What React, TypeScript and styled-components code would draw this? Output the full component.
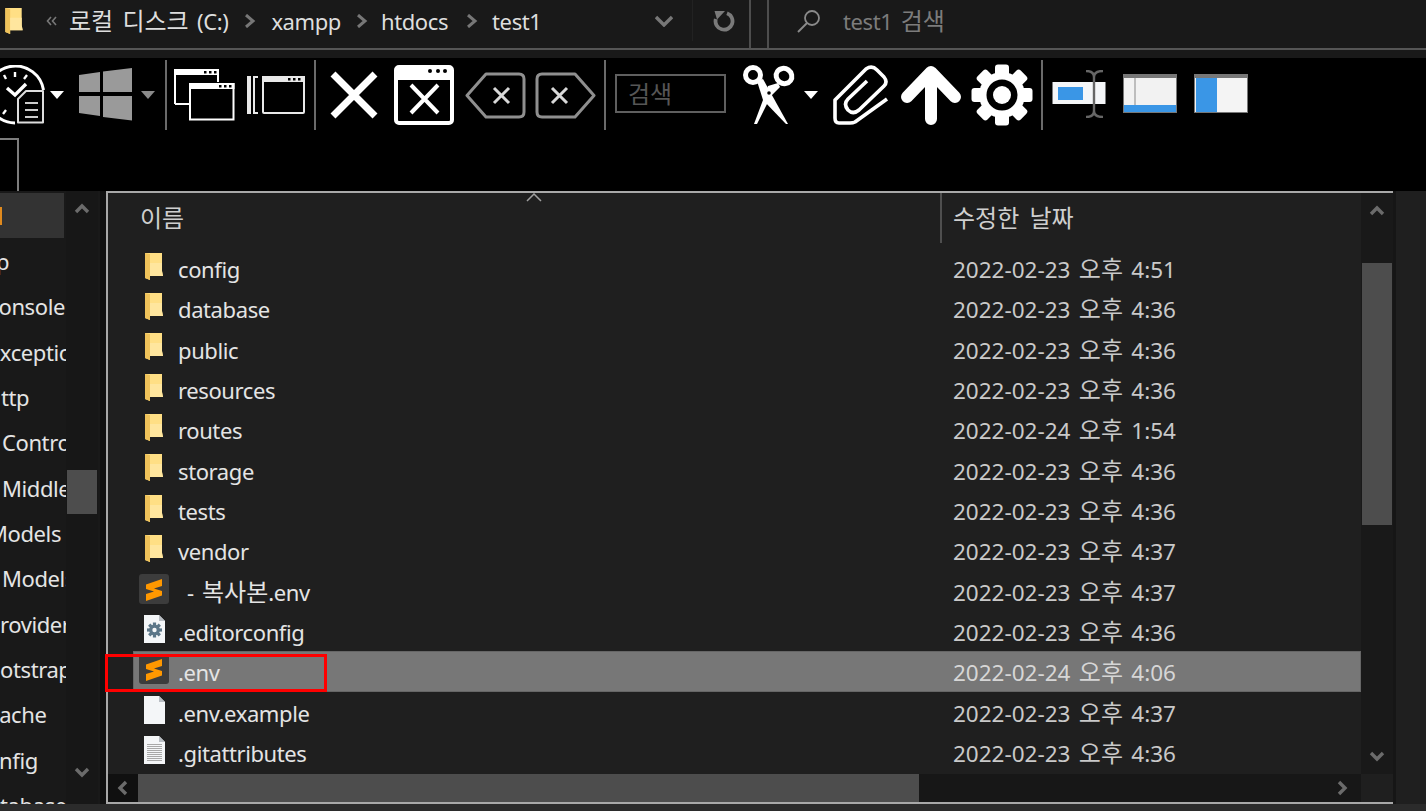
import React from "react";
import styled, { createGlobalStyle } from "styled-components";

const files = [
  { name: "config", date: "2022-02-23 오후 4:51", kind: "folder" },
  { name: "database", date: "2022-02-23 오후 4:36", kind: "folder" },
  { name: "public", date: "2022-02-23 오후 4:36", kind: "folder" },
  { name: "resources", date: "2022-02-23 오후 4:36", kind: "folder" },
  { name: "routes", date: "2022-02-24 오후 1:54", kind: "folder" },
  { name: "storage", date: "2022-02-23 오후 4:36", kind: "folder" },
  { name: "tests", date: "2022-02-23 오후 4:36", kind: "folder" },
  { name: "vendor", date: "2022-02-23 오후 4:37", kind: "folder" },
  { name: "- 복사본.env", date: "2022-02-23 오후 4:37", kind: "sublime", indent: 9 },
  { name: ".editorconfig", date: "2022-02-23 오후 4:36", kind: "config" },
  { name: ".env", date: "2022-02-24 오후 4:06", kind: "sublime", selected: true },
  { name: ".env.example", date: "2022-02-23 오후 4:37", kind: "blank" },
  { name: ".gitattributes", date: "2022-02-23 오후 4:36", kind: "text" },
];

const tree = [
  { name: "", shift: 0, selected: true },
  { name: "app", shift: -29 },
  { name: "Console", shift: -15 },
  { name: "Exceptions", shift: -12 },
  { name: "Http", shift: -15 },
  { name: "Controllers", shift: 2 },
  { name: "Middleware", shift: 2 },
  { name: "Models", shift: -12 },
  { name: "Models", shift: 2 },
  { name: "Providers", shift: -13 },
  { name: "bootstrap", shift: -26 },
  { name: "cache", shift: -11 },
  { name: "config", shift: -24 },
  { name: "database", shift: -25 },
];

const GlobalStyle = createGlobalStyle`
  html, body {
    margin: 0;
    background: #000;
    overflow: hidden;
  }
`;

const Page = styled.div`
  width: 1426px;
  height: 811px;
  display: flex;
  flex-direction: column;
  overflow: hidden;
  background: #000;
  font-family: "Noto Sans", "Noto Sans CJK KR", sans-serif;
  font-size: 22px;
  letter-spacing: -0.4px;
  line-height: 1;
`;

// hangul runs a bit bigger than latin, like the original UI font
const Han = styled.span`
  font-size: 24px;
  letter-spacing: 0;
`;

const AddressRow = styled.div`
  height: 48px;
  flex: none;
  display: flex;
  gap: 16px;
  background: #191919;
  border-bottom: 2px solid #555;
`;

const AddressBox = styled.div`
  width: 751px;
  flex: none;
  box-sizing: border-box;
  display: flex;
  align-items: center;
  padding: 0 0 7px 5px;
  border-right: 2px solid #4d4d4d;
  color: #dedede;
  word-spacing: 3px;
`;

const Crumb = styled.span`
  margin-left: ${(p: { $gap: number }) => p.$gap}px;
  white-space: nowrap;
`;

const CrumbArrow = styled.svg`
  margin-left: ${(p: { $gap: number }) => p.$gap}px;
  flex: none;
`;

const AddressDivider = styled.div`
  width: 1px;
  height: 48px;
  flex: none;
  margin: -7px 0 0 19px;
  background: #222;
`;

const SearchBox = styled.div`
  flex: 1;
  display: flex;
  align-items: center;
  padding: 0 0 7px 28px;
  border-left: 2px solid #4d4d4d;
  color: #7c7c7c;
  word-spacing: 3px;
`;

const SearchHint = styled.span`
  margin-left: 22px;
  white-space: nowrap;
`;

const AddressGap = styled.div`
  height: 8px;
  flex: none;
  background: #191919;
`;

const Toolbar = styled.div`
  height: 80px;
  flex: none;
  display: flex;
  align-items: center;
  padding-bottom: 6px;
  box-sizing: border-box;
`;

const ToolIcon = styled.svg<{ $left: number; $up?: number }>`
  flex: none;
  display: block;
  margin-left: ${(p) => p.$left}px;
  margin-bottom: ${(p) => p.$up || 0}px;
`;

const ToolSeparator = styled.div`
  width: 2px;
  height: 70px;
  flex: none;
  background: #6a6a6a;
  margin-left: ${(p: { $left: number }) => p.$left}px;
`;

const ToolSearch = styled.div`
  width: 111px;
  height: 39px;
  flex: none;
  box-sizing: border-box;
  display: flex;
  align-items: center;
  padding-left: 11px;
  margin: 0 0 3px 9px;
  border: 2px solid #5f5f5f;
  color: #565656;
`;

const TabStrip = styled.div`
  height: 53px;
  flex: none;
`;

const TabStub = styled.div`
  width: 19px;
  height: 53px;
  box-sizing: border-box;
  border-top: 2px solid #7d7d7d;
  border-right: 2px solid #7d7d7d;
`;

const Main = styled.div`
  flex: 1;
  min-height: 0;
  display: flex;
  background: #111;
`;

const NavPane = styled.div`
  width: 100px;
  flex: none;
  display: flex;
  background: #191919;
`;

const NavList = styled.div`
  width: 66px;
  flex: none;
  padding-top: 2px;
  overflow: hidden;
`;

const NavRow = styled.div<{ $selected?: boolean }>`
  height: 45.33px;
  display: flex;
  align-items: center;
  color: #e4e4e4;
  white-space: nowrap;
  background: ${(p) => (p.$selected ? "#333" : "transparent")};
  width: ${(p) => (p.$selected ? "64px" : "auto")};
`;

const NavText = styled.span<{ $shift: number }>`
  margin-left: ${(p) => p.$shift}px;
`;

const NavMark = styled.div`
  width: 2px;
  height: 18px;
  background: #e08a1e;
`;

const VerticalBar = styled.div`
  width: 32px;
  flex: none;
  display: flex;
  flex-direction: column;
  align-items: center;
  background: #171717;
`;

const BarArrow = styled.svg<{ $top: number }>`
  flex: none;
  margin-top: ${(p) => p.$top}px;
`;

const Thumb = styled.div<{ $top: number; $height: number }>`
  width: 30px;
  height: ${(p) => p.$height}px;
  flex: none;
  margin-top: ${(p) => p.$top}px;
  background: #4d4d4d;
`;

const ListFrame = styled.div`
  width: 1287px;
  margin-left: 6px;
  flex: none;
  box-sizing: border-box;
  display: grid;
  grid-template-columns: 1fr 32px;
  grid-template-rows: 1fr 28px;
  background: #1f1f1f;
  border-top: 2px solid #a8a8a8;
  border-left: 2px solid #a8a8a8;
  border-bottom: 2px solid #a8a8a8;
`;

const ListBody = styled.div`
  min-width: 0;
  display: flex;
  flex-direction: column;
`;

const HeaderRow = styled.div`
  height: 50px;
  flex: none;
  margin-bottom: 5px;
  position: relative;
  display: flex;
  align-items: center;
  color: #cfcfcf;
  word-spacing: 4px;
`;

const NameHead = styled.div`
  width: 832px;
  flex: none;
  box-sizing: border-box;
  padding-left: 32px;
`;

const DateHead = styled.div`
  height: 100%;
  display: flex;
  align-items: center;
  padding-left: 11px;
  border-left: 2px solid #4f4f4f;
`;

const SortMark = styled.svg`
  position: absolute;
  left: 418px;
  top: 0;
`;

const FileRow = styled.div<{ $selected?: boolean }>`
  height: 40.33px;
  margin-left: 25px;
  padding-top: 2px;
  box-sizing: border-box;
  position: relative;
  display: flex;
  align-items: center;
  color: #e4e4e4;
  background: ${(p) => (p.$selected ? "#777" : "transparent")};
  box-shadow: ${(p) => (p.$selected ? "inset 0 0 0 1px #666" : "none")};
`;

const IconCell = styled.div`
  width: 45px;
  flex: none;
  display: flex;
  justify-content: center;
  padding-right: 3px;
  margin-bottom: 6px;
  box-sizing: border-box;
`;

const FileName = styled.div<{ $indent?: number }>`
  width: 775px;
  flex: none;
  box-sizing: border-box;
  padding-left: ${(p) => p.$indent || 0}px;
  white-space: nowrap;
  word-spacing: 3px;
`;

const FileDate = styled.div<{ $selected?: boolean }>`
  white-space: nowrap;
  font-size: 22.5px;
  letter-spacing: 0;
  word-spacing: 2.5px;
  color: ${(p) => (p.$selected ? "#d6d6d6" : "#c9c9c9")};
`;

const RedBox = styled.div`
  position: absolute;
  left: -28px;
  top: 3px;
  width: 222px;
  height: 38px;
  box-sizing: border-box;
  border: 3px solid #f00;
`;

const ListScroll = styled.div`
  display: flex;
  flex-direction: column;
  align-items: center;
  background: #191919;
`;

const HorizontalBar = styled.div`
  display: flex;
  align-items: center;
  background: #171717;
`;

const LeftCap = styled.div`
  width: 30px;
  height: 100%;
  flex: none;
  display: flex;
  align-items: center;
  justify-content: center;
  background: #101010;
`;

const HThumb = styled.div`
  width: 781px;
  height: 100%;
  flex: none;
  background: #4d4d4d;
`;

const RightCap = styled.div`
  flex: 1;
  display: flex;
  justify-content: flex-end;
  padding-right: 10px;
`;

const Corner = styled.div`
  background: #1f1f1f;
`;

const RightGutter = styled.div`
  flex: 1;
  background: #1f1f1f;
  border-left: 3px solid #161616;
`;

const BottomStrip = styled.div`
  height: 7px;
  flex: none;
  background: #2b2b2b;
`;

// wraps the hangul parts of a label in <Han>
function Label({ text }: { text: string }) {
  const parts = text.split(/([가-힣]+(?: [가-힣]+)*)/);
  return (
    <>
      {parts.map((part, i) => (i % 2 ? <Han key={i}>{part}</Han> : part))}
    </>
  );
}

function Chevron({ dir, size = 18, color = "#6b6b6b" }: { dir: "up" | "down" | "left" | "right"; size?: number; color?: string }) {
  const points = {
    up: "3,12 9,6 15,12",
    down: "3,6 9,12 15,6",
    left: "12,3 6,9 12,15",
    right: "6,3 12,9 6,15",
  }[dir];
  return (
    <svg width={size} height={size} viewBox="0 0 18 18">
      <polyline points={points} fill="none" stroke={color} strokeWidth="3.4" />
    </svg>
  );
}

function FolderIcon({ width = 18, height = 27 }: { width?: number; height?: number }) {
  return (
    <svg width={width} height={height} viewBox="0 0 18 27">
      <path d="M0 0H17V18L18 23H5V27L0 25Z" fill="#ffdf85" />
      <path d="M0 0L5 1V27L0 25Z" fill="#efc25a" />
      <path d="M5 10H17V18L18 23H5Z" fill="#ffe69e" />
    </svg>
  );
}

function SublimeIcon() {
  return (
    <svg width="30" height="30" viewBox="0 0 30 30">
      <rect width="30" height="30" rx="3" fill="#3c3c3c" />
      <path d="M7 10.500L23 5V12L15 14.500L23 17V21.500L7 27V20L15 17.500L7 15Z" fill="#ff9800" />
    </svg>
  );
}

function DocIcon({ kind }: { kind: string }) {
  return (
    <svg width="21" height="28" viewBox="0 0 21 28">
      <path d="M0 0H15L21 6V28H0Z" fill="#f4f6f8" />
      <path d="M15 0V6H21Z" fill="#b9bec4" />
      {kind === "config" && (
        <g transform="translate(10.5 15)">
          {[0, 45, 90, 135].map((a) => (
            <rect key={a} x="-1.6" y="-7.5" width="3.2" height="15" fill="#5b7688" transform={`rotate(${a})`} />
          ))}
          <circle r="5.4" fill="#5b7688" />
          <circle r="2.2" fill="#f4f6f8" />
        </g>
      )}
      {kind === "text" && (
        <g stroke="#a8a8a8" strokeWidth="1">
          {[8, 10, 12, 14, 16, 18, 20, 22, 24].map((y) => (
            <line key={y} x1="3" x2="18" y1={y + 0.5} y2={y + 0.5} />
          ))}
        </g>
      )}
    </svg>
  );
}

function FileIcon({ kind }: { kind: string }) {
  if (kind === "folder") return <FolderIcon />;
  if (kind === "sublime") return <SublimeIcon />;
  return <DocIcon kind={kind} />;
}

const Caret = ({ left, color }: { left: number; color: string }) => (
  <ToolIcon $left={left} width="14" height="8" viewBox="0 0 14 8">
    <path d="M0 0H14L7 8Z" fill={color} />
  </ToolIcon>
);

function ClockIcon() {
  return (
    <ToolIcon $left={-15} width="60" height="60" viewBox="-15 65 60 60">
      <path d="M15 123A28.5 28.5 0 1 1 43.5 90" fill="none" stroke="#fff" strokeWidth="3" />
      <g stroke="#fff" strokeWidth="2.4">
        <line x1="15" y1="72" x2="15" y2="77" />
        <line x1="27" y1="75" x2="24" y2="79" />
        <line x1="4" y1="75" x2="6" y2="79" />
        <line x1="6" y1="110" x2="3" y2="114" />
      </g>
      <polyline points="7,88 15,95 26,84" fill="none" stroke="#fff" strokeWidth="3.4" />
      <path d="M18 99L26 91H43V122.5H18Z" fill="#000" stroke="#ddd" strokeWidth="2" strokeLinejoin="round" />
      <g stroke="#ccc" strokeWidth="2">
        <line x1="25" y1="103" x2="38" y2="103" />
        <line x1="25" y1="110" x2="38" y2="110" />
        <line x1="25" y1="117" x2="38" y2="117" />
      </g>
    </ToolIcon>
  );
}

function WindowsIcon() {
  return (
    <ToolIcon $left={15} $up={2} width="54" height="53" viewBox="79 68 54 53">
      <g fill="#9a9a9a">
        <path d="M79 75L100 72V92H79Z" />
        <path d="M103 71.500L132 68V92H103Z" />
        <path d="M79 96H100V116L79 113Z" />
        <path d="M103 96H132V120.500L103 117Z" />
      </g>
    </ToolIcon>
  );
}

function CascadeIcon() {
  return (
    <ToolIcon $left={7} width="61" height="52" viewBox="174 69 61 52">
      <path d="M175 104V70H218V82" fill="none" stroke="#fff" strokeWidth="2" />
      <rect x="174" y="69" width="45" height="6" fill="#fff" />
      <path d="M175 104H189" stroke="#fff" strokeWidth="2" />
      <rect x="190" y="84" width="43.500" height="35.500" fill="#000" stroke="#fff" strokeWidth="2" />
      <rect x="189" y="83" width="45.500" height="6" fill="#fff" />
      <g fill="#000">
        <rect x="204" y="71" width="2.500" height="2.500" />
        <rect x="209" y="71" width="2.500" height="2.500" />
        <rect x="214" y="71" width="2.500" height="2.500" />
        <rect x="219" y="85" width="2.500" height="2.500" />
        <rect x="224" y="85" width="2.500" height="2.500" />
        <rect x="229" y="85" width="2.500" height="2.500" />
      </g>
    </ToolIcon>
  );
}

function StackIcon() {
  return (
    <ToolIcon $left={12} width="58" height="38" viewBox="247 76 58 38">
      <rect x="263" y="77" width="41" height="36" fill="none" stroke="#e8e8e8" strokeWidth="2" rx="1" />
      <rect x="262" y="76" width="43" height="6" fill="#e8e8e8" />
      <path d="M250 77H248V113H250ZM258 77H254V113H258" fill="none" stroke="#e8e8e8" strokeWidth="2" />
      <g fill="#000">
        <rect x="288" y="78" width="2.500" height="2.500" />
        <rect x="293" y="78" width="2.500" height="2.500" />
        <rect x="298" y="78" width="2.500" height="2.500" />
      </g>
    </ToolIcon>
  );
}

function CrossIcon() {
  return (
    <ToolIcon $left={14} width="48" height="48" viewBox="0 0 48 48">
      <path d="M3 3L45 45M45 3L3 45" stroke="#fff" strokeWidth="7" />
    </ToolIcon>
  );
}

function WindowCloseIcon() {
  return (
    <ToolIcon $left={16} width="60" height="60" viewBox="0 0 60 60">
      <rect x="2" y="2" width="56" height="56" rx="3" fill="#000" stroke="#fff" strokeWidth="4" />
      <rect x="2" y="2" width="56" height="13" fill="#fff" />
      <circle cx="36" cy="6" r="2" fill="#000" />
      <circle cx="44" cy="6" r="2" fill="#000" />
      <circle cx="51" cy="6" r="2" fill="#000" />
      <path d="M17 20L44 48M44 20L17 48" stroke="#fff" strokeWidth="4" />
    </ToolIcon>
  );
}

function DeleteTagIcon({ left, flip }: { left: number; flip?: boolean }) {
  return (
    <ToolIcon $left={left} width="61" height="47" viewBox="0 0 61 47">
      <g transform={flip ? "translate(61 0) scale(-1 1)" : undefined}>
        <path d="M2 23.500L21 2H54Q59 2 59 7V40Q59 45 54 45H21Z" fill="none" stroke="#8f8f8f" strokeWidth="3" strokeLinejoin="round" />
        <path d="M29 16L44 31M44 16L29 31" stroke="#d8d8d8" strokeWidth="3" />
      </g>
    </ToolIcon>
  );
}

function ScissorsIcon() {
  return (
    <ToolIcon $left={17} width="54" height="60" viewBox="743 65 54 60">
      <g fill="none" stroke="#fff" strokeWidth="5">
        <ellipse cx="753" cy="75" rx="7.500" ry="7.500" />
        <ellipse cx="784" cy="76" rx="8" ry="7.500" transform="rotate(35 784 76)" />
      </g>
      <path d="M757 81L763 79L788 124H786L763 100Z" fill="#fff" />
      <path d="M778 83L780 87L771 96L757 124H754L763 100L768 86Z" fill="#fff" />
      <circle cx="769" cy="93" r="1.800" fill="#000" />
    </ToolIcon>
  );
}

function ClipIcon() {
  return (
    <ToolIcon $left={15} width="56" height="60" viewBox="98 9 56 60">
      <path
        d="M152 43L120 66Q118 67 115 67H104Q100 67 100 62V44L131 13Q137 9 142 14L149 21Q153 26 149 30L124 54Q118 59 113 54Q108 48 113 43L132 25"
        fill="none"
        stroke="#fff"
        strokeWidth="3.600"
        strokeLinejoin="round"
      />
    </ToolIcon>
  );
}

function ArrowIcon() {
  return (
    <ToolIcon $left={12} width="60" height="60" viewBox="0 0 60 60">
      <path d="M30 54V8M6 32L30 7L54 32" fill="none" stroke="#fff" strokeWidth="12" strokeLinecap="round" strokeLinejoin="round" />
    </ToolIcon>
  );
}

function GearIcon() {
  return (
    <ToolIcon $left={10} width="62" height="62" viewBox="-31 -31 62 62">
      {[0, 45, 90, 135, 180, 225, 270, 315].map((a) => (
        <rect key={a} x="-7" y="-30.500" width="14" height="16" rx="3" fill="#fff" transform={`rotate(${a})`} />
      ))}
      <circle r="23" fill="#fff" />
      <circle r="15.500" fill="#000" />
      <circle r="9" fill="#fff" />
    </ToolIcon>
  );
}

function RenameIcon() {
  return (
    <ToolIcon $left={9} $up={2} width="54" height="48" viewBox="1052 71 54 48">
      <rect x="1052.500" y="83" width="53" height="22" fill="#f4f6f8" />
      <rect x="1058" y="88" width="25" height="13" fill="#3a96e6" />
      <path d="M1094 75V114M1086 72Q1094 72 1094 78Q1094 72 1103 72M1086 118Q1094 118 1094 112Q1094 118 1103 118" fill="none" stroke="#666" strokeWidth="2.400" />
    </ToolIcon>
  );
}

function PaneBottomIcon() {
  return (
    <ToolIcon $left={17} $up={3} width="54" height="39" viewBox="0 0 54 39">
      <rect width="54" height="39" fill="#777" />
      <rect x="1" y="4" width="52" height="34" fill="#f2f2f2" />
      <rect x="11" y="4" width="2" height="27" fill="#bdbdbd" />
      <rect x="1" y="31" width="52" height="7" fill="#3a96e6" />
    </ToolIcon>
  );
}

function PaneLeftIcon() {
  return (
    <ToolIcon $left={17} $up={3} width="54" height="39" viewBox="0 0 54 39">
      <rect width="54" height="39" fill="#777" />
      <rect x="1" y="4" width="52" height="34" fill="#f4f4f4" />
      <rect x="2" y="4" width="21" height="34" fill="#3a96e6" />
    </ToolIcon>
  );
}

export default function App() {
  return (
    <Page>
      <GlobalStyle />
      <AddressRow>
        <AddressBox>
          <FolderIcon width={18} height={26} />
          <CrumbArrow $gap={23} width="12" height="12" viewBox="0 0 12 12">
            <path d="M5 2L1.500 6L5 10M10 2L6.500 6L10 10" fill="none" stroke="#777" strokeWidth="1.600" />
          </CrumbArrow>
          <Crumb $gap={11}>
            <Label text="로컬 디스크 (C:)" />
          </Crumb>
          <CrumbArrow $gap={16} width="12" height="14" viewBox="0 0 12 14">
            <path d="M2 1L9 7L2 13" fill="none" stroke="#777" strokeWidth="3" />
          </CrumbArrow>
          <Crumb $gap={15}>xampp</Crumb>
          <CrumbArrow $gap={15} width="12" height="14" viewBox="0 0 12 14">
            <path d="M2 1L9 7L2 13" fill="none" stroke="#777" strokeWidth="3" />
          </CrumbArrow>
          <Crumb $gap={13}>htdocs</Crumb>
          <CrumbArrow $gap={18} width="12" height="14" viewBox="0 0 12 14">
            <path d="M2 1L9 7L2 13" fill="none" stroke="#777" strokeWidth="3" />
          </CrumbArrow>
          <Crumb $gap={14}>test1</Crumb>
          <CrumbArrow $gap={113} width="18" height="12" viewBox="0 0 18 12">
            <path d="M1 2L9 10L17 2" fill="none" stroke="#777" strokeWidth="3.400" />
          </CrumbArrow>
          <AddressDivider />
          <CrumbArrow $gap={20} width="22" height="22" viewBox="0 0 22 22">
            <path d="M14 3.200A8.500 8.500 0 1 1 2.800 9" fill="none" stroke="#7a7a7a" strokeWidth="3.800" />
            <path d="M1.500 1H12L4 9.500Z" fill="#7a7a7a" />
          </CrumbArrow>
        </AddressBox>
        <SearchBox>
          <svg width="24" height="24" viewBox="0 0 24 24">
            <circle cx="15" cy="9" r="7" fill="none" stroke="#8a8a8a" strokeWidth="1.800" />
            <path d="M10 14L1 23" stroke="#8a8a8a" strokeWidth="2" />
          </svg>
          <SearchHint>
            <Label text="test1 검색" />
          </SearchHint>
        </SearchBox>
      </AddressRow>
      <AddressGap />
      <Toolbar>
        <ClockIcon />
        <Caret left={5} color="#fff" />
        <WindowsIcon />
        <Caret left={8} color="#8a8a8a" />
        <ToolSeparator $left={10} />
        <CascadeIcon />
        <StackIcon />
        <ToolSeparator $left={9} />
        <CrossIcon />
        <WindowCloseIcon />
        <DeleteTagIcon left={11} />
        <DeleteTagIcon left={9} flip />
        <ToolSeparator $left={8} />
        <ToolSearch>
          <Label text="검색" />
        </ToolSearch>
        <ScissorsIcon />
        <Caret left={7} color="#fff" />
        <ClipIcon />
        <ArrowIcon />
        <GearIcon />
        <ToolSeparator $left={8} />
        <RenameIcon />
        <PaneBottomIcon />
        <PaneLeftIcon />
      </Toolbar>
      <TabStrip>
        <TabStub />
      </TabStrip>
      <Main>
        <NavPane>
          <NavList>
            {tree.map((item, i) => (
              <NavRow key={i} $selected={item.selected}>
                {item.selected && <NavMark />}
                <NavText $shift={item.shift}>{item.name}</NavText>
              </NavRow>
            ))}
          </NavList>
          <VerticalBar>
            <BarArrow $top={9} width="18" height="18" viewBox="0 0 18 18">
              <polyline points="3,12 9,6 15,12" fill="none" stroke="#6b6b6b" strokeWidth="3.400" />
            </BarArrow>
            <Thumb $top={252} $height={44} />
            <BarArrow $top={249} width="18" height="18" viewBox="0 0 18 18">
              <polyline points="3,6 9,12 15,6" fill="none" stroke="#6b6b6b" strokeWidth="3.400" />
            </BarArrow>
          </VerticalBar>
        </NavPane>
        <ListFrame>
          <ListBody>
            <HeaderRow>
              <NameHead>
                <Label text="이름" />
              </NameHead>
              <DateHead>
                <Label text="수정한 날짜" />
              </DateHead>
              <SortMark width="16" height="9" viewBox="0 0 16 9">
                <path d="M1 8L8 1L15 8" fill="none" stroke="#a0a0a0" strokeWidth="1.500" />
              </SortMark>
            </HeaderRow>
            {files.map((file) => (
              <FileRow key={file.name} $selected={file.selected}>
                <IconCell>
                  <FileIcon kind={file.kind} />
                </IconCell>
                <FileName $indent={file.indent}>
                  <Label text={file.name} />
                </FileName>
                <FileDate $selected={file.selected}>
                  <Label text={file.date} />
                </FileDate>
                {file.selected && <RedBox />}
              </FileRow>
            ))}
          </ListBody>
          <ListScroll>
            <BarArrow $top={9} width="18" height="18" viewBox="0 0 18 18">
              <polyline points="3,12 9,6 15,12" fill="none" stroke="#6b6b6b" strokeWidth="3.400" />
            </BarArrow>
            <Thumb $top={43} $height={262} />
            <BarArrow $top={222} width="18" height="18" viewBox="0 0 18 18">
              <polyline points="3,6 9,12 15,6" fill="none" stroke="#6b6b6b" strokeWidth="3.400" />
            </BarArrow>
          </ListScroll>
          <HorizontalBar>
            <LeftCap>
              <Chevron dir="left" />
            </LeftCap>
            <HThumb />
            <RightCap>
              <Chevron dir="right" />
            </RightCap>
          </HorizontalBar>
          <Corner />
        </ListFrame>
        <RightGutter />
      </Main>
      <BottomStrip />
    </Page>
  );
}
